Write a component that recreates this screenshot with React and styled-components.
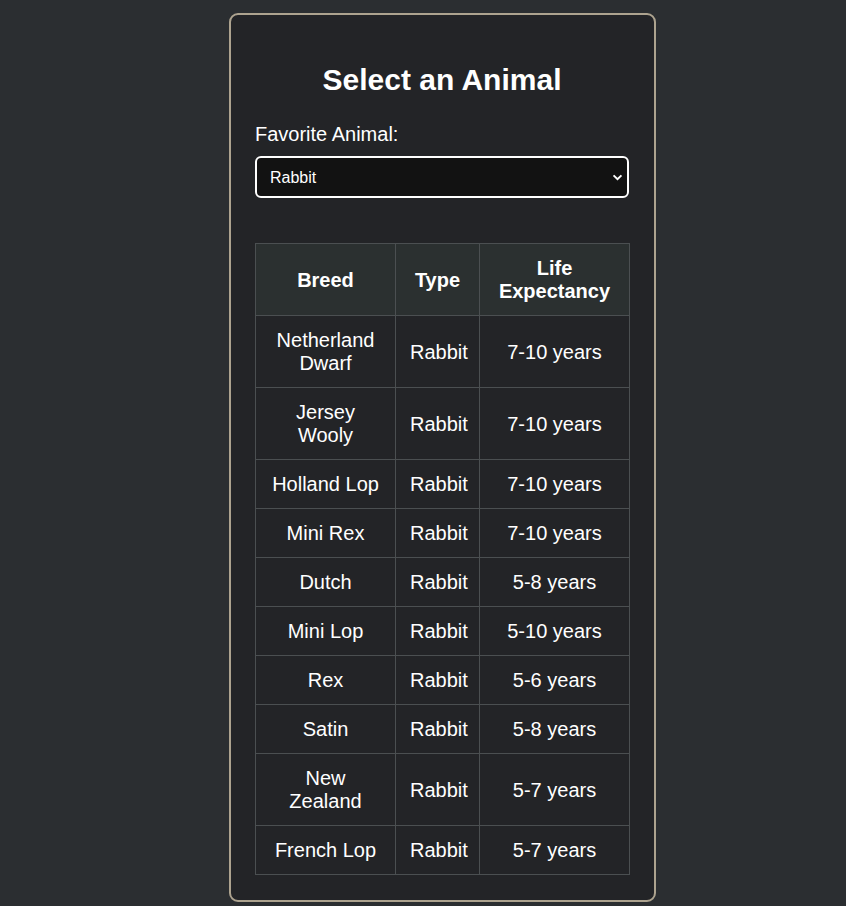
import React from "react";
import styled, { createGlobalStyle } from "styled-components";

const Global = createGlobalStyle`
  html, body { margin: 0; padding: 0; background: #2b2e31; }
  body { font-family: "Liberation Sans", Arial, sans-serif; color: #fff; }
`;

const Page = styled.div`
  display: flex;
  justify-content: center;
  padding-top: 13px;
  padding-left: 39px;
`;

const Card = styled.div`
  width: 374px;
  padding: 24px 25px 25px 24px;
  background: #232427;
  border: 2px solid #ada38f;
  border-radius: 9px;
`;

const Title = styled.h2`
  margin: 24px 0 26px;
  text-align: center;
  font-size: 30px;
  font-weight: 700;
  line-height: 34px;
`;

const Label = styled.label`
  display: block;
  font-size: 20px;
  line-height: 23px;
  margin-bottom: 10px;
`;

const Select = styled.select`
  display: block;
  width: 374px;
  height: 42px;
  padding: 0 13px;
  background: #121212;
  color: #fff;
  border: 2px solid #ffffff;
  border-radius: 6px;
  font-family: "Liberation Sans", Arial, sans-serif;
  font-size: 16px;
  appearance: none;
  background-image: url("data:image/svg+xml;utf8,<svg xmlns='http://www.w3.org/2000/svg' width='12' height='8' viewBox='0 0 12 8'><path d='M1.5 1.5 L6 6 L10.5 1.5' fill='none' stroke='white' stroke-width='2.2'/></svg>");
  background-repeat: no-repeat;
  background-position: right 4px center;
  background-size: 11px 7px;
  margin-bottom: 45px;
`;

const Table = styled.table`
  width: 374px;
  border-collapse: collapse;
  table-layout: fixed;
`;

const Th = styled.th`
  background: #2b3030;
  border: 1px solid #4b4f51;
  font-size: 20px;
  font-weight: 700;
  line-height: 23px;
  padding: 13px 14px 12px;
  height: 46px;
  text-align: center;
`;

const Td = styled.td`
  border: 1px solid #4b4f51;
  font-size: 20px;
  line-height: 23px;
  padding: 13px 14px 12px;
  text-align: center;
`;

const rows = [
  ["Netherland Dwarf", "7-10 years"],
  ["Jersey Wooly", "7-10 years"],
  ["Holland Lop", "7-10 years"],
  ["Mini Rex", "7-10 years"],
  ["Dutch", "5-8 years"],
  ["Mini Lop", "5-10 years"],
  ["Rex", "5-6 years"],
  ["Satin", "5-8 years"],
  ["New Zealand", "5-7 years"],
  ["French Lop", "5-7 years"],
];

export default function App() {
  return (
    <>
      <Global />
      <Page>
        <Card>
          <Title>Select an Animal</Title>
          <Label htmlFor="animal">Favorite Animal:</Label>
          <Select id="animal" defaultValue="Rabbit">
            <option>Dog</option>
            <option>Cat</option>
            <option>Rabbit</option>
          </Select>
          <Table>
            <colgroup>
              <col style={{ width: "140px" }} />
              <col style={{ width: "84px" }} />
              <col style={{ width: "150px" }} />
            </colgroup>
            <thead>
              <tr>
                <Th>Breed</Th>
                <Th>Type</Th>
                <Th>Life Expectancy</Th>
              </tr>
            </thead>
            <tbody>
              {rows.map(([b, l]) => (
                <tr key={b}>
                  <Td>{b}</Td>
                  <Td>Rabbit</Td>
                  <Td>{l}</Td>
                </tr>
              ))}
            </tbody>
          </Table>
        </Card>
      </Page>
    </>
  );
}
